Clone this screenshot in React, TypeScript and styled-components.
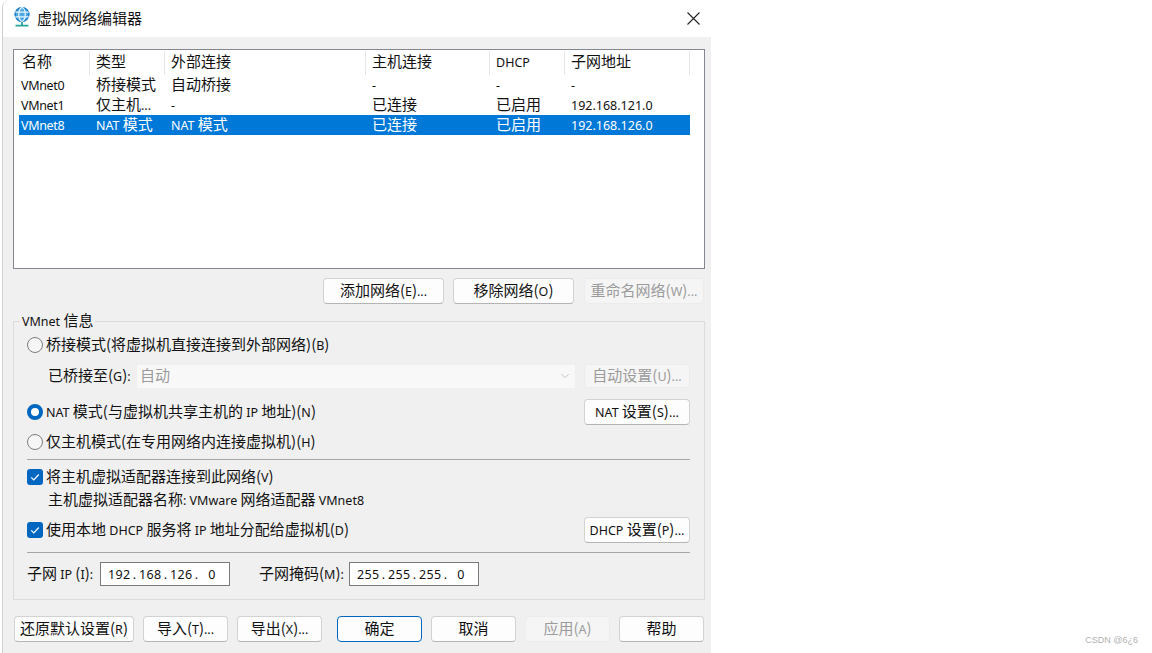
import React from 'react'
import styled, { createGlobalStyle } from 'styled-components'
import { ChevronDown } from 'lucide-react'

const GlobalStyle = createGlobalStyle`
  html, body {
    margin: 0;
    padding: 0;
    background: #fff;
  }
  body {
    font-family: "Noto Sans CJK SC", "Noto Sans", sans-serif;
    font-size: 15px;
    color: #111;
  }
`

// latin runs are a bit smaller than the CJK ones in the dialog font, parens stay big
const T = ({ children }: { children: string }) => (
  <Text>
    {children.split(/([\x00-\x27\x2a-\x7f]+)/).map((part, i) =>
      /^[\x00-\x27\x2a-\x7f]+$/.test(part) ? <Latin key={i}>{part}</Latin> : part
    )}
  </Text>
)

const columns = [
  { name: '名称', cells: ['VMnet0', 'VMnet1', 'VMnet8'] },
  { name: '类型', cells: ['桥接模式', '仅主机...', 'NAT 模式'] },
  { name: '外部连接', cells: ['自动桥接', '-', 'NAT 模式'] },
  { name: '主机连接', cells: ['-', '已连接', '已连接'] },
  { name: 'DHCP', cells: ['-', '已启用', '已启用'] },
  { name: '子网地址', cells: ['-', '192.168.121.0', '192.168.126.0'] },
]

const GlobeIcon = () => (
  <IconSlot>
    <svg width="18" height="20" viewBox="0 0 18 20" fill="none">
      <circle cx="9" cy="7.5" r="7.5" fill="#4fa9e4" />
      <circle cx="9" cy="7.5" r="6.9" stroke="#1b78c2" strokeWidth="1.2" />
      <ellipse cx="9" cy="7.5" rx="3.2" ry="6.8" stroke="#e8f6ff" strokeWidth="1.2" />
      <path d="M2.2 5.2h13.6M2.2 9.8h13.6" stroke="#e8f6ff" strokeWidth="1.2" />
      <path d="M9 15v3" stroke="#27a59c" strokeWidth="1.8" />
      <path d="M2.5 18.6h13" stroke="#27a59c" strokeWidth="1.8" />
    </svg>
  </IconSlot>
)

const CloseIcon = () => (
  <svg width="13" height="13" viewBox="0 0 13 13" fill="none">
    <path d="M.5.5l12 12M12.5.5l-12 12" stroke="#222" strokeWidth="1.1" />
  </svg>
)

const CheckIcon = () => (
  <svg width="12" height="12" viewBox="0 0 12 12" fill="none">
    <path d="M2.2 6.3l2.6 2.6 5-5.4" stroke="#fff" strokeWidth="1.2" />
  </svg>
)

const IpValue = ({ parts }: { parts: string[] }) => (
  <IpInput>
    {parts.map((part, i) => (
      <React.Fragment key={i}>
        <Octet>{part}</Octet>
        {i < 3 && <Dot>.</Dot>}
      </React.Fragment>
    ))}
  </IpInput>
)

export default function App() {
  return (
    <Page>
      <GlobalStyle />
      <Dialog>
        <TitleBar>
          <GlobeIcon />
          <Title>虚拟网络编辑器</Title>
          <CloseButton>
            <CloseIcon />
          </CloseButton>
        </TitleBar>
        <Body>
          <NetworkList>
            <HeaderRow>
              {columns.map((col, i) => (
                <HeaderCell key={col.name} $first={i === 0}>
                  <T>{col.name}</T>
                </HeaderCell>
              ))}
            </HeaderRow>
            {[0, 1, 2].map(row => (
              <DataRow key={row} $selected={row === 2}>
                {columns.map((col, i) => (
                  <DataCell key={col.name} $first={i === 0}>
                    <T>{col.cells[row]}</T>
                  </DataCell>
                ))}
              </DataRow>
            ))}
          </NetworkList>

          <ListActions>
            <Button $w={121}><T>添加网络(E)...</T></Button>
            <Button $w={121}><T>移除网络(O)</T></Button>
            <Button $w={120} $gap={10} $disabled><T>重命名网络(W)...</T></Button>
          </ListActions>

          <InfoGroup>
            <Legend><T>VMnet 信息</T></Legend>
            <Row $h={20} $top={6}>
              <Radio />
              <T>桥接模式(将虚拟机直接连接到外部网络)(B)</T>
            </Row>
            <Row $h={24} $top={9}>
              <BridgeLabel><T>已桥接至(G):</T></BridgeLabel>
              <Combo>
                <T>自动</T>
                <ChevronDown size={14} color="#b0b0b0" strokeWidth={1.2} />
              </Combo>
              <Button $w={106} $h={24} $disabled><T>自动设置(U)...</T></Button>
            </Row>
            <Row $h={26} $top={11}>
              <Radio $checked />
              <T>NAT 模式(与虚拟机共享主机的 IP 地址)(N)</T>
              <Button $w={106} $push><T>NAT 设置(S)...</T></Button>
            </Row>
            <Row $h={20} $top={7}>
              <Radio />
              <T>仅主机模式(在专用网络内连接虚拟机)(H)</T>
            </Row>
            <Separator $top={7} />
            <Row $h={20} $top={7}>
              <Checkbox><CheckIcon /></Checkbox>
              <T>将主机虚拟适配器连接到此网络(V)</T>
            </Row>
            <Row $h={20} $top={3}>
              <AdapterName><T>主机虚拟适配器名称: VMware 网络适配器 VMnet8</T></AdapterName>
            </Row>
            <Row $h={26} $top={7}>
              <Checkbox><CheckIcon /></Checkbox>
              <T>使用本地 DHCP 服务将 IP 地址分配给虚拟机(D)</T>
              <Button $w={106} $push><T>DHCP 设置(P)...</T></Button>
            </Row>
            <Separator $top={9} />
            <Row $h={24} $top={9}>
              <SubnetLabel><T>子网 IP (I):</T></SubnetLabel>
              <IpValue parts={['192', '168', '126', '0']} />
              <MaskLabel><T>子网掩码(M):</T></MaskLabel>
              <IpValue parts={['255', '255', '255', '0']} />
            </Row>
          </InfoGroup>

          <Footer>
            <Button $w={120}><T>还原默认设置(R)</T></Button>
            <Button $w={85}><T>导入(T)...</T></Button>
            <Button $w={85}><T>导出(X)...</T></Button>
            <Button $w={85} $primary $gap={15}><T>确定</T></Button>
            <Button $w={85}><T>取消</T></Button>
            <Button $w={85} $disabled><T>应用(A)</T></Button>
            <Button $w={85}><T>帮助</T></Button>
          </Footer>
        </Body>
      </Dialog>
      <Watermark>CSDN @6¿6</Watermark>
    </Page>
  )
}

const Text = styled.span`
  display: inline-block;
  margin-bottom: 4px;
  white-space: pre;
`
const Latin = styled.span`
  font-family: "Noto Sans", sans-serif;
  font-size: 12.5px;
`
const Page = styled.div`
  display: flex;
  justify-content: space-between;
  width: 1152px;
  height: 653px;
  padding-left: 2px;
  box-sizing: border-box;
  overflow: hidden;
`
const Dialog = styled.div`
  display: flex;
  flex-direction: column;
  width: 709px;
  height: 653px;
  box-sizing: border-box;
  border-left: 1px solid #cfcfcf;
  border-top-left-radius: 8px;
  background: #f0f0f0;
  overflow: hidden;
`
const TitleBar = styled.div`
  display: flex;
  align-items: center;
  flex: none;
  height: 37px;
  padding-left: 10px;
  background: #fff;
`
const IconSlot = styled.div`
  display: flex;
  margin-bottom: 3px;
`
const Title = styled.div`
  margin-left: 6px;
  margin-bottom: 2px;
  line-height: 35px;
`
const CloseButton = styled.div`
  display: flex;
  margin-left: auto;
  margin-right: 11px;
`
const Body = styled.div`
  display: flex;
  flex-direction: column;
  padding: 12px 6px 0 10px;
`
const NetworkList = styled.div`
  height: 220px;
  box-sizing: border-box;
  padding-left: 5px;
  border: 1px solid #828790;
  background: #fff;
`
const HeaderRow = styled.div`
  display: grid;
  grid-template-columns: 71px 75px 201px 124px 75px 125px;
  width: 671px;
  height: 25px;
`
const HeaderCell = styled.div<{ $first?: boolean }>`
  height: 24px;
  margin-top: 1px;
  padding-left: ${p => (p.$first ? 3 : 6)}px;
  border-right: 1px solid #e5e5e5;
  line-height: 20px;
  white-space: nowrap;
`
const DataRow = styled.div<{ $selected?: boolean }>`
  display: grid;
  grid-template-columns: 71px 75px 201px 124px 75px 125px;
  grid-template-rows: 20px;
  width: 671px;
  height: 20px;
  background: ${p => (p.$selected ? '#0078d7' : 'transparent')};
  color: ${p => (p.$selected ? '#fff' : '#111')};
`
const DataCell = styled.div<{ $first?: boolean }>`
  height: 20px;
  padding-left: ${p => (p.$first ? 2 : 6)}px;
  line-height: 18px;
  letter-spacing: ${p => (p.$first ? '-0.35px' : 'normal')};
  white-space: nowrap;
`
const ListActions = styled.div`
  display: flex;
  justify-content: flex-end;
  gap: 9px;
  margin-top: 9px;
  padding-right: 1px;
`
const Button = styled.div<{
  $w: number
  $h?: number
  $disabled?: boolean
  $primary?: boolean
  $push?: boolean
  $gap?: number
}>`
  display: flex;
  align-items: center;
  justify-content: center;
  flex: none;
  width: ${p => p.$w}px;
  height: ${p => p.$h ?? 26}px;
  box-sizing: border-box;
  margin-left: ${p => (p.$push ? 'auto' : p.$gap ? `${p.$gap - 9}px` : '0')};
  border: 1px solid ${p => (p.$primary ? '#0067c0' : p.$disabled ? '#ececec' : '#d2d2d2')};
  border-bottom-color: ${p => (p.$primary ? '#0067c0' : p.$disabled ? '#ececec' : '#b4b4b4')};
  border-radius: 4px;
  background: ${p => (p.$disabled ? '#f5f5f5' : '#fdfdfd')};
  color: ${p => (p.$disabled ? '#9b9b9b' : '#111')};
  white-space: nowrap;
`
const InfoGroup = styled.fieldset`
  display: flex;
  flex-direction: column;
  min-width: 0;
  height: 287px;
  box-sizing: border-box;
  margin: 9px 0 0;
  padding: 0 14px 0 13px;
  border: 1px solid #dcdcdc;
`
const Legend = styled.legend`
  height: 16px;
  margin-left: -7px;
  padding: 0 2px;
  line-height: 14px;
`
const Row = styled.div<{ $h: number; $top: number }>`
  display: flex;
  align-items: center;
  flex: none;
  height: ${p => p.$h}px;
  margin-top: ${p => p.$top}px;
  white-space: nowrap;
`
const Radio = styled.div<{ $checked?: boolean }>`
  flex: none;
  width: 16px;
  height: 16px;
  box-sizing: border-box;
  margin-right: 3px;
  border-radius: 50%;
  border: ${p => (p.$checked ? '4.5px solid #0067c0' : '1px solid #7d7d7d')};
  background: ${p => (p.$checked ? '#fff' : '#f6f6f6')};
`
const Checkbox = styled.div`
  display: flex;
  align-items: center;
  justify-content: center;
  flex: none;
  width: 16px;
  height: 16px;
  margin-right: 3px;
  border-radius: 3px;
  background: #0067c0;
`
const BridgeLabel = styled.span`
  flex: none;
  width: 89px;
  padding-left: 21px;
`
const Combo = styled.div`
  display: flex;
  align-items: center;
  justify-content: space-between;
  flex: none;
  width: 438px;
  height: 23px;
  box-sizing: border-box;
  margin-right: 9px;
  padding: 0 3px 0 3px;
  background: #f8f8f8;
  color: #9b9b9b;
`
const Separator = styled.div<{ $top: number }>`
  flex: none;
  height: 1px;
  margin-top: ${p => p.$top}px;
  background: #a6a6a6;
`
const AdapterName = styled.span`
  padding-left: 21px;
`
const SubnetLabel = styled.span`
  flex: none;
  width: 73px;
  box-sizing: border-box;
`
const MaskLabel = styled.span`
  flex: none;
  width: 90px;
  margin-left: 29px;
`
const IpInput = styled.div`
  display: flex;
  align-items: center;
  flex: none;
  width: 130px;
  height: 24px;
  box-sizing: border-box;
  padding-left: 7px;
  border: 1px solid #7a7a7a;
  background: #fff;
  font-family: "Noto Sans", sans-serif;
  font-size: 12.5px;
  letter-spacing: 0.3px;
`
const Octet = styled.span`
  width: 22px;
  text-align: center;
`
const Dot = styled.span`
  width: 9px;
  text-align: center;
`
const Footer = styled.div`
  display: flex;
  gap: 9px;
  margin-top: 16px;
  padding: 0 1px;
`
const Watermark = styled.div`
  align-self: flex-end;
  margin: 0 14px 8px 0;
  font-family: "Liberation Sans", sans-serif;
  font-size: 9px;
  color: #b0b0b0;
`
